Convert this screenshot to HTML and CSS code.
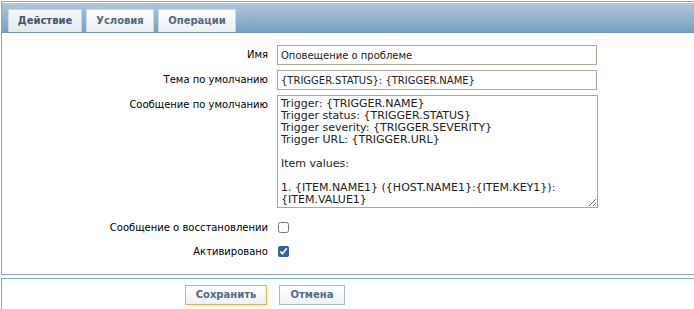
FILE: index.html
```html
<!DOCTYPE html>
<html lang="ru">
<head>
<meta charset="utf-8">
<title>Действие</title>
<link rel="stylesheet" href="styles.css">
</head>
<body>
<div class="page">
  <div class="tabbar">
    <div class="tab active">Действие</div>
    <div class="tab t2">Условия</div>
    <div class="tab t3">Операции</div>
  </div>
  <div class="panel">
    <div class="row">
      <label class="lbl">Имя</label>
      <input class="field" type="text" value="Оповещение о проблеме">
    </div>
    <div class="row">
      <label class="lbl">Тема по умолчанию</label>
      <input class="field" type="text" value="{TRIGGER.STATUS}: {TRIGGER.NAME}">
    </div>
    <div class="row">
      <label class="lbl">Сообщение по умолчанию</label>
      <textarea class="area">Trigger: {TRIGGER.NAME}
Trigger status: {TRIGGER.STATUS}
Trigger severity: {TRIGGER.SEVERITY}
Trigger URL: {TRIGGER.URL}

Item values:

1. {ITEM.NAME1} ({HOST.NAME1}:{ITEM.KEY1}): {ITEM.VALUE1}
2. {ITEM.NAME2} ({HOST.NAME2}:{ITEM.KEY2}): {ITEM.VALUE2}</textarea>
    </div>
    <div class="row check-row first">
      <label class="lbl">Сообщение о восстановлении</label>
      <input class="chk" type="checkbox">
    </div>
    <div class="row check-row">
      <label class="lbl">Активировано</label>
      <input class="chk" type="checkbox" checked>
    </div>
  </div>
  <div class="footer">
    <button class="btn primary">Сохранить</button>
    <button class="btn cancel">Отмена</button>
  </div>
</div>
</body>
</html>
```
FILE: styles.css
```css
html, body {
  margin: 0;
  padding: 0;
  background: #ffffff;
}
body {
  font-family: "DejaVu Sans", Verdana, sans-serif;
  font-size: 10px;
  color: #000;
}
.page {
  padding-top: 1px;
  padding-left: 1px;
}
.tabbar {
  display: flex;
  align-items: flex-end;
  gap: 4px;
  height: 32px;
  box-sizing: border-box;
  padding-left: 6px;
  border-top: 1px solid #8aa5c0;
  border-left: 1px solid #8aa5c0;
  box-shadow: inset 0 1px 0 #ffffff;
  background: linear-gradient(#b3c7da, #7aa0c2);
  border-bottom: 1px solid #7596b6;
}
.tab {
  height: 23px;
  box-sizing: border-box;
  line-height: 22px;
  text-align: center;
  font-weight: bold;
  color: #56687f;
  background: linear-gradient(#ffffff, #eaf0f5);
  border: 1px solid #c9d6e3;
  border-bottom: none;
  width: 74px;
}
.tab.t2 { width: 68px; }
.tab.t3 { width: 78px; }
.tab.active {
  color: #46566b;
  background: linear-gradient(#f4f7fa, #e3eaf1);
}
.panel {
  border-left: 1px solid #8aa5c0;
  border-bottom: 1px solid #8aa5c0;
  padding: 12px 0 16px;
  display: flex;
  flex-direction: column;
  gap: 5px;
}
.row {
  display: flex;
  align-items: flex-start;
  gap: 9px;
}
.lbl {
  width: 266px;
  flex: none;
  text-align: right;
  line-height: 19px;
}
.field {
  width: 320px;
  height: 20px;
  box-sizing: border-box;
  margin: 0;
  border: 1px solid #aba89a;
  padding: 0 3px;
  font-family: "DejaVu Sans", Verdana, sans-serif;
  font-size: 10px;
  color: #222;
  outline: none;
}
.area {
  width: 321px;
  height: 113px;
  box-sizing: border-box;
  margin: 0;
  border: 1px solid #aba89a;
  padding: 2px 3px;
  font-family: "DejaVu Sans", Verdana, sans-serif;
  font-size: 11px;
  line-height: 12px;
  color: #222;
  overflow: hidden;
  resize: both;
  outline: none;
}
.check-row {
  height: 13px;
  align-items: center;
  margin-top: 6px;
}
.check-row .lbl {
  line-height: 13px;
}
.check-row.first {
  margin-top: 8px;
}
.chk {
  margin: 0 0 0 1px;
  width: 11px;
  height: 11px;
  accent-color: #3a5f9a;
}
.footer {
  margin-top: 3px;
  border-top: 1px solid #8aa5c0;
  border-left: 1px solid #8aa5c0;
  border-bottom: 1px solid #8aa5c0;
  height: 31px;
  display: flex;
  align-items: center;
  padding-left: 183px;
  gap: 12px;
}
.btn {
  height: 20px;
  box-sizing: border-box;
  margin: 0;
  padding: 0;
  font-family: "DejaVu Sans", Verdana, sans-serif;
  font-size: 10px;
  font-weight: bold;
  color: #566a84;
  background: linear-gradient(#ffffff, #eef2f6);
  border: 1px solid #a9bad0;
}
.btn.primary {
  width: 82px;
  border-color: #f5ab4b;
}
.btn.cancel {
  width: 66px;
}
```
